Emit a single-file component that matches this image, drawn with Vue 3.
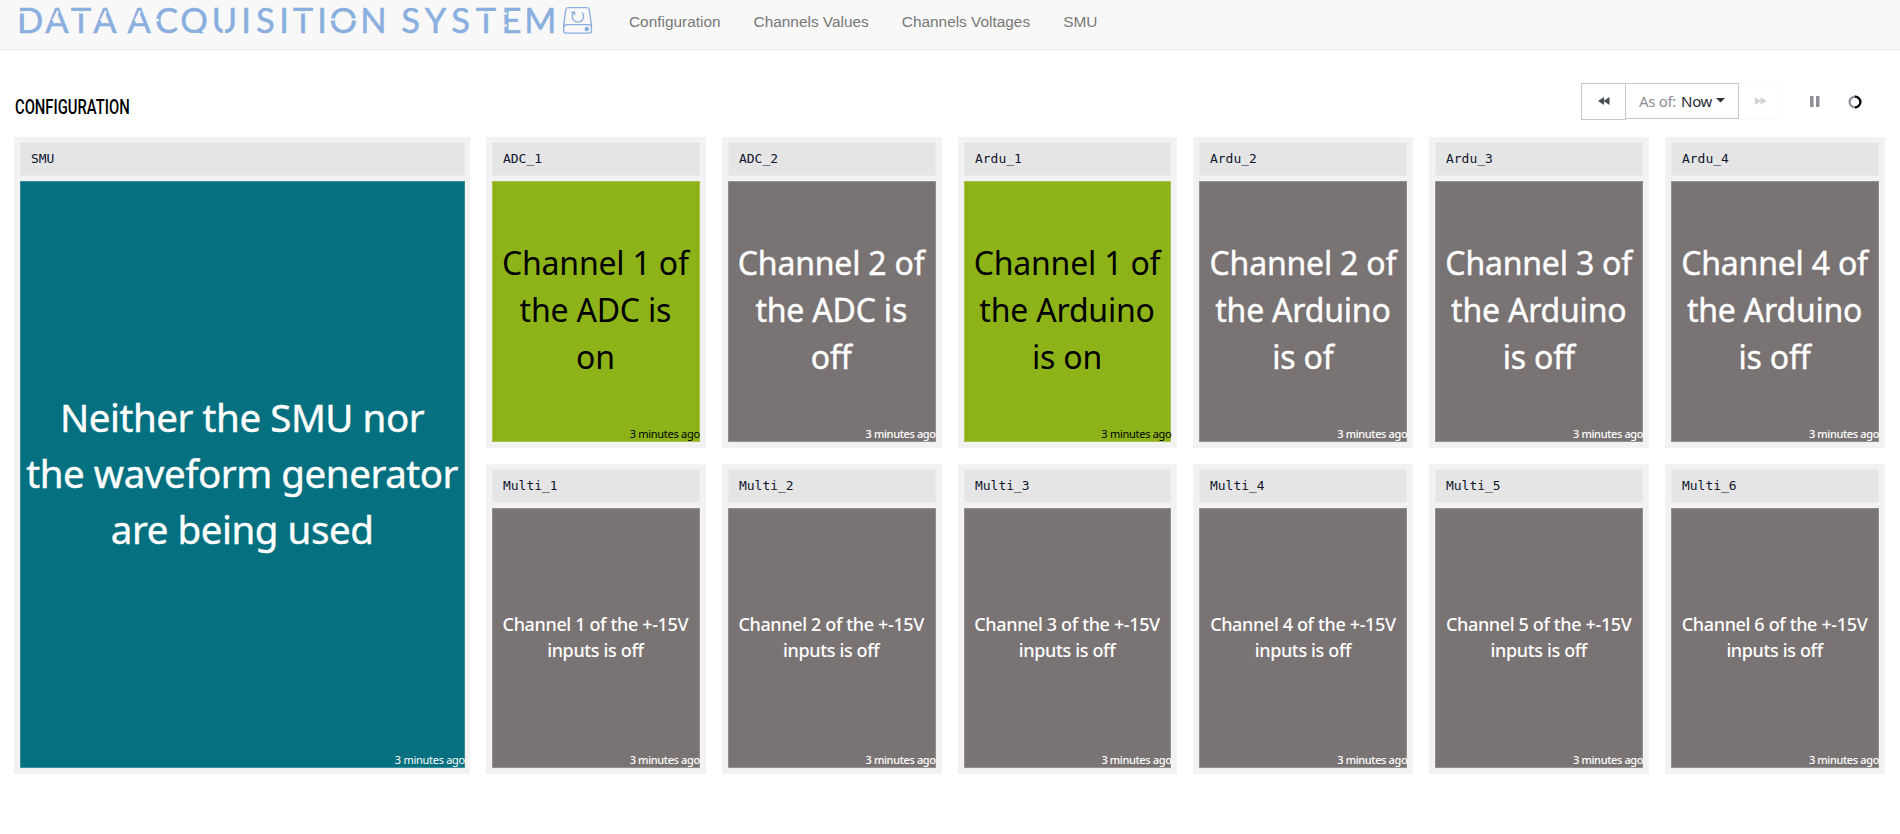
<script setup>
const links = ['Configuration', 'Channels Values', 'Channels Voltages', 'SMU']

// One horizontal centre per character of the wordmark, spaces included.
const wordmark = 'DATA ACQUISITION SYSTEM'
const centres = [
  30, 57, 81, 105, 122, 139.2, 166.5, 194, 224.5, 246, 265.3, 284, 303, 322, 343.3, 373.5,
  392, 410.5, 435.5, 460.5, 486, 511.5, 540.3,
].join(' ')

const cards = [
  { title: 'SMU', tone: 'teal', size: 'xl', lines: ['Neither the SMU nor', 'the waveform generator', 'are being used'] },
  { title: 'ADC_1', tone: 'green', size: 'lg', lines: ['Channel 1 of', 'the ADC is', 'on'] },
  { title: 'ADC_2', tone: 'grey', size: 'lg', lines: ['Channel 2 of', 'the ADC is', 'off'] },
  { title: 'Ardu_1', tone: 'green', size: 'lg', lines: ['Channel 1 of', 'the Arduino', 'is on'] },
  { title: 'Ardu_2', tone: 'grey', size: 'lg', lines: ['Channel 2 of', 'the Arduino', 'is of'] },
  { title: 'Ardu_3', tone: 'grey', size: 'lg', lines: ['Channel 3 of', 'the Arduino', 'is off'] },
  { title: 'Ardu_4', tone: 'grey', size: 'lg', lines: ['Channel 4 of', 'the Arduino', 'is off'] },
  ...[1, 2, 3, 4, 5, 6].map((n) => ({
    title: `Multi_${n}`,
    tone: 'grey',
    size: 'md',
    lines: [`Channel ${n} of the +-15V`, 'inputs is off'],
  })),
]
</script>

<template>
  <div class="page">
    <header class="navbar">
      <svg class="logo" width="600" height="44" viewBox="0 0 600 44">
        <text class="wordmark" y="32.7" :x="centres">{{ wordmark }}</text>
        <g class="cuts">
          <path d="M17 12.400h8M73 12.400h16M295 12.400h16M478 12.400h16" />
          <path d="M153 20.200h6M329 19.500h6M351 19.500h7M500 13.500h7M500 25.500h7" />
          <path d="M53 21l5-10M101 21l5-10M135.200 21l5-10M224 34v-6M425 16l7 5" />
          <rect class="trim" x="182" y="33.300" width="27" height="8" />
        </g>
        <g class="drive">
          <path d="M568 7.600h19q2 0 2.300 2l2.200 16v5q0 2.600-2.600 2.600h-22.700q-2.600 0-2.600-2.600v-5l2.200-16q.3-2 2.200-2z" />
          <path d="M564 27q.6-2.300 3-2.300h21.500q2.400 0 3 2.300" />
          <path d="M574 12.200a5.700 5.700 0 1 0 8 .2" />
          <path d="M571 12.600l3.300-.8.500 3.400" />
          <circle class="led" cx="586.800" cy="29" r="1.700" />
        </g>
      </svg>
      <nav class="links">
        <a v-for="l in links" :key="l">{{ l }}</a>
      </nav>
    </header>

    <div class="toolbar">
      <h1><span>CONFIGURATION</span></h1>
      <div class="controls">
        <button class="btn back">
          <svg width="12" height="8" viewBox="0 0 12 8"><path d="M6 0v8L0 4zM11.500 0v8L5.500 4z" fill="#464c54" /></svg>
        </button>
        <button class="btn range">
          <span class="asof">As of:</span><span class="now">Now</span>
          <svg width="9" height="5" viewBox="0 0 9 5"><path d="M0 0h9L4.500 4.500z" fill="#333" /></svg>
        </button>
        <button class="btn fwd">
          <svg width="12" height="8" viewBox="0 0 12 8"><path d="M0 0v8l6-4zM5.500 0v8l6-4z" fill="#d1d3d6" /></svg>
        </button>
        <svg class="pause" width="10" height="11" viewBox="0 0 10 11"><path d="M0 0h3.500v11H0zM6 0h3.500v11H6z" fill="#8e8e97" /></svg>
        <svg class="spinner" width="14" height="14" viewBox="0 0 14 14" fill="none" stroke-width="2.200">
          <circle cx="7" cy="7" r="5.400" stroke="#8e8e97" />
          <path d="M7 1.600a5.400 5.400 0 0 1 0 10.800" stroke="#000" />
        </svg>
      </div>
    </div>

    <main class="grid">
      <section v-for="c in cards" :key="c.title" class="card" :class="c.size">
        <div class="title"><span>{{ c.title }}</span></div>
        <div class="body" :class="c.tone">
          <div class="message">
            <div v-for="line in c.lines" :key="line">{{ line }}</div>
          </div>
          <div class="ago">3 minutes ago</div>
        </div>
      </section>
    </main>
  </div>
</template>

<style>
body { margin: 0; background: #fff; }
</style>

<style scoped>
.page { width: 1900px; height: 834px; overflow: hidden; background: #fff; font-family: "Noto Sans", sans-serif; }
.navbar { display: flex; box-sizing: border-box; height: 50px; background: #f8f8f8; border-bottom: 1px solid #e7e7e7; }
.logo { flex: none; display: block; }
.wordmark { font: 34.500px Lato, sans-serif; fill: #8aafdf; stroke: #8aafdf; stroke-width: .5; text-anchor: middle; white-space: pre; }
.cuts { stroke: #f8f8f8; stroke-width: 2.200; fill: none; }
.trim { fill: #f8f8f8; stroke: none; }
.drive { stroke: #8aafdf; stroke-width: 1.300; fill: none; }
.led { fill: #8aafdf; }
.links { display: flex; gap: 33px; margin-left: 29px; font: 15.400px/44px "Liberation Sans", Arial, sans-serif; color: #777; white-space: nowrap; }

.toolbar { display: flex; justify-content: space-between; height: 87px; padding: 0 14px; }
h1 { margin: 0; padding: 44px 0 0 1px; font: 500 21px/26px Roboto, sans-serif; color: #000; }
h1 span { display: inline-block; transform: scaleX(.705); transform-origin: left; }
.controls { display: flex; align-items: flex-start; padding-top: 33px; width: 305px; }
.btn { display: flex; align-items: center; justify-content: center; box-sizing: border-box; height: 37px; margin: 0; padding: 0; background: #fff; border: 1px solid #c8c8c8; font: 15px "Noto Sans", sans-serif; }
.back { width: 45px; padding: 0 0 2px 0; }
.range { width: 114px; height: 36px; margin-left: -1px; padding-bottom: 1px; letter-spacing: -.3px; }
.asof { color: #8e8e97; margin-right: 5px; }
.now { color: #292933; margin-right: 4px; }
.fwd { width: 44px; border-color: #fafafa; border-left: 0; padding-bottom: 2px; }
.pause { margin: 13px 27.500px 0 27px; }
.spinner { margin-top: 11.500px; }

.grid { display: grid; grid-template-columns: repeat(8, 1fr); grid-template-rows: 310.600px 310.600px; gap: 16px; margin: 0 15px 0 14.300px; }
.card { display: flex; flex-direction: column; gap: 5px; box-sizing: border-box; padding: 5px 6px 6px; background: #f2f2f2; min-width: 0; }
.card.xl { grid-column: span 2; grid-row: span 2; padding-right: 5px; }
.title { flex: none; box-sizing: border-box; height: 34px; padding-left: 10px; border: 1px solid #ebebeb; background: #e5e5e5; font: 12px/32px "DejaVu Sans Mono", monospace; color: #10162f; }
.title span { display: inline-block; transform: scaleX(1.08); transform-origin: left; }
.body { position: relative; flex: 1; display: flex; align-items: center; justify-content: center; box-sizing: border-box; border: 1px solid rgba(255, 255, 255, .2); text-align: center; white-space: nowrap; }
.message { padding-bottom: 3px; }
.teal { background: #05707f; color: #fff; }
.green { background: #8db319; color: #000; }
.grey { background: #7a7373; color: #fff; }
.xl .message { font-size: 38.500px; line-height: 56px; letter-spacing: -.45px; padding-right: 1px; -webkit-text-stroke: .4px; }
.lg .message { font-size: 32px; line-height: 47px; letter-spacing: -.2px; padding-right: 1px; }
.lg .grey .message { -webkit-text-stroke: .4px; }
.md .message { font-size: 18px; line-height: 26px; letter-spacing: -.36px; font-weight: 500; padding: 0 1px 1px 0; }
.ago { position: absolute; right: -1px; bottom: 0; font-size: 11px; line-height: 15px; letter-spacing: -.28px; }
.grey .ago { font-weight: 500; letter-spacing: -.37px; }
</style>
